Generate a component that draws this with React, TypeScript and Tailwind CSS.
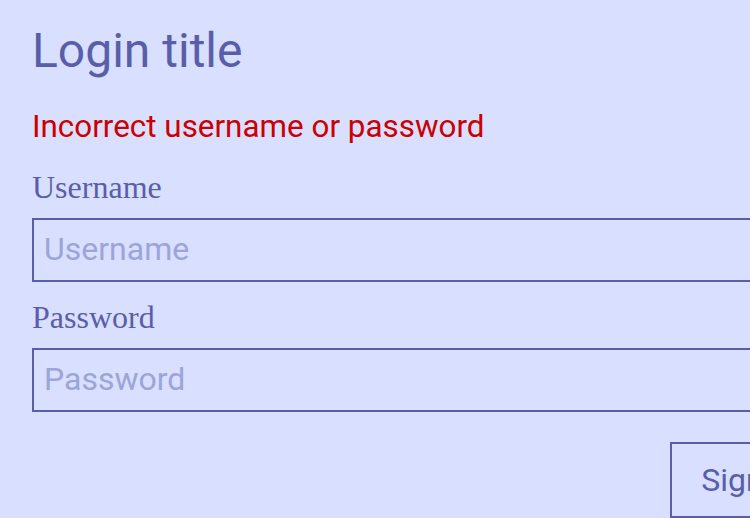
import React from "react";

const App = () => {
    return (
        <div className="min-h-screen w-full overflow-hidden bg-[#d8dfff] text-[#5a5ea8] font-['Roboto',sans-serif]">
            <form className="w-[796px] ml-[32px] pt-[23px] flex flex-col" onSubmit={(e) => e.preventDefault()}>
                <h1 className="text-[48px] leading-[56px] font-normal">Login title</h1>

                <p className="mt-[28px] text-[31.4px] leading-[40px] text-[#cc0000]">Incorrect username or password</p>

                <label htmlFor="username" className="mt-[20px] mb-[11px] text-[32px] leading-[40px] font-['Liberation_Serif',serif]">
                    Username
                </label>
                <input
                    id="username"
                    placeholder="Username"
                    className="h-[64px] border-2 border-[#5a5ea8] bg-transparent px-[10px] pb-[2px] text-[32px] outline-none placeholder:text-[#9da4d9]"
                />

                <label htmlFor="password" className="mt-[15px] mb-[11px] text-[32px] leading-[40px] font-['Liberation_Serif',serif]">
                    Password
                </label>
                <input
                    id="password"
                    type="password"
                    placeholder="Password"
                    className="h-[64px] border-2 border-[#5a5ea8] bg-transparent px-[10px] pb-[2px] text-[32px] outline-none placeholder:text-[#9da4d9]"
                />

                <div className="mt-[30px] flex justify-end">
                    <button type="submit" className="border-2 border-[#5a5ea8] px-[29px] py-[16px] text-[32px] leading-[40px]">
                        Sign in
                    </button>
                </div>
            </form>
        </div>
    );
};

export default App;
